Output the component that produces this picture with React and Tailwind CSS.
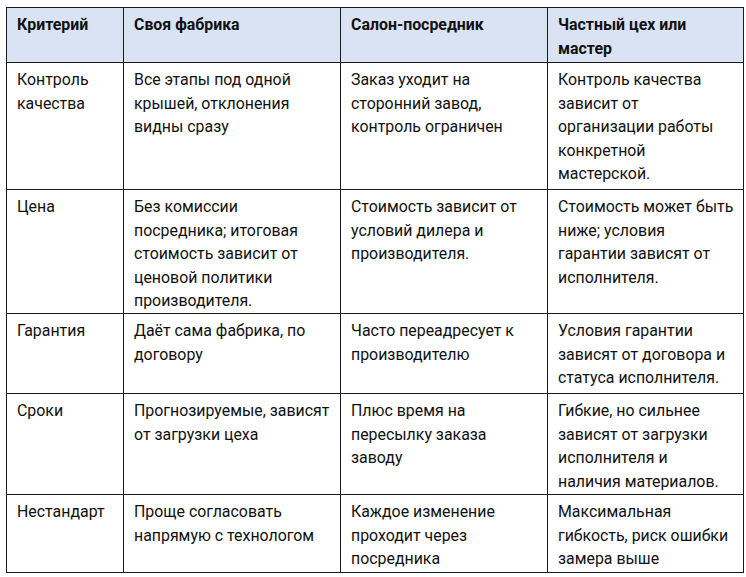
import React from "react";

const header = ["Критерий", "Своя фабрика", "Салон-посредник", ["Частный цех или", "мастер"]];

const rows = [
  {
    h: "h-[127px]",
    cells: [
      ["Контроль", "качества"],
      ["Все этапы под одной", "крышей, отклонения", "видны сразу"],
      ["Заказ уходит на", "сторонний завод,", "контроль ограничен"],
      ["Контроль качества", "зависит от", "организации работы", "конкретной", "мастерской."],
    ],
  },
  {
    h: "h-[124px]",
    cells: [
      ["Цена"],
      ["Без комиссии", "посредника; итоговая", "стоимость зависит от", "ценовой политики", "производителя."],
      ["Стоимость зависит от", "условий дилера и", "производителя."],
      ["Стоимость может быть", "ниже; условия", "гарантии зависят от", "исполнителя."],
    ],
  },
  {
    h: "h-[80px]",
    cells: [
      ["Гарантия"],
      ["Даёт сама фабрика, по", "договору"],
      ["Часто переадресует к", "производителю"],
      ["Условия гарантии", "зависят от договора и", "статуса исполнителя."],
    ],
  },
  {
    h: "h-[101px]",
    cells: [
      ["Сроки"],
      ["Прогнозируемые, зависят", "от загрузки цеха"],
      ["Плюс время на", "пересылку заказа", "заводу"],
      ["Гибкие, но сильнее", "зависят от загрузки", "исполнителя и", "наличия материалов."],
    ],
  },
  {
    h: "h-[78px]",
    cells: [
      ["Нестандарт"],
      ["Проще согласовать", "напрямую с технологом"],
      ["Каждое изменение", "проходит через", "посредника"],
      ["Максимальная", "гибкость, риск ошибки", "замера выше"],
    ],
  },
];

function Lines({ lines }) {
  const arr = Array.isArray(lines) ? lines : [lines];
  return arr.map((l, i) => (
    <div key={i} className="whitespace-nowrap">
      {l}
    </div>
  ));
}

export default function App() {
  return (
    <div className="min-h-[577px] w-[746px] bg-white pl-[6px] pt-[7px] font-['Roboto',sans-serif] text-[15.9px] leading-[23.5px] text-[#111]">
      <table className="w-[737px] table-fixed border-collapse">
        <colgroup>
          <col className="w-[117px]" />
          <col className="w-[217px]" />
          <col className="w-[207px]" />
          <col className="w-[196px]" />
        </colgroup>
        <thead>
          <tr className="h-[55px] bg-[#dae3f3]">
            {header.map((h, i) => (
              <th
                key={i}
                className="border border-[#1a1a1a] pb-0 pl-[10px] pr-[6px] pt-[5px] text-left align-top font-bold"
              >
                <Lines lines={h} />
              </th>
            ))}
          </tr>
        </thead>
        <tbody>
          {rows.map((r, ri) => (
            <tr key={ri} className={r.h}>
              {r.cells.map((c, ci) => (
                <td
                  key={ci}
                  className="border border-[#1a1a1a] pb-0 pl-[10px] pr-[6px] pt-[5px] align-top"
                >
                  <Lines lines={c} />
                </td>
              ))}
            </tr>
          ))}
        </tbody>
      </table>
    </div>
  );
}
